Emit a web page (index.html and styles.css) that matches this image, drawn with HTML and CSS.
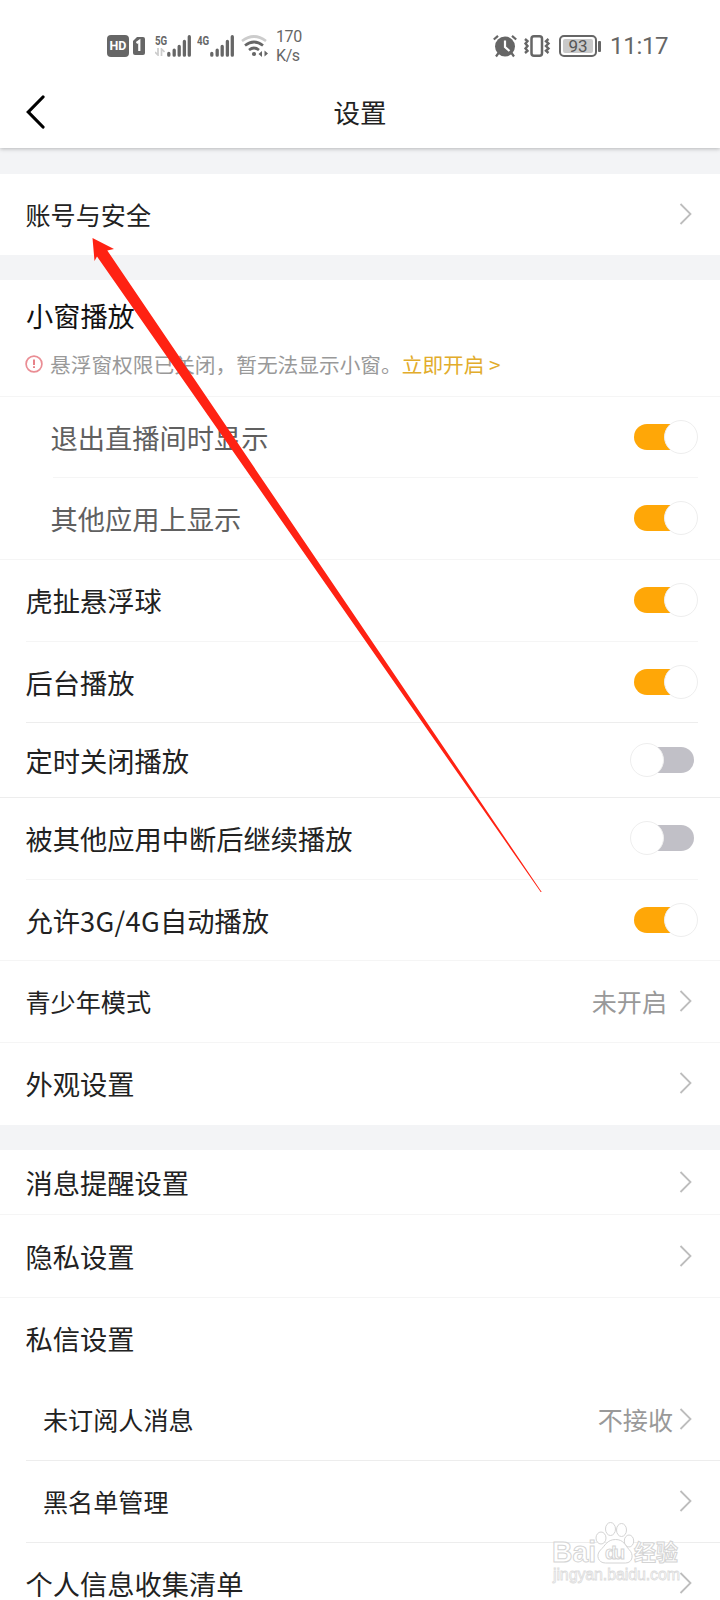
FILE: index.html
```html
<!DOCTYPE html>
<html lang="zh-CN">
<head>
<meta charset="utf-8">
<title>设置</title>
<link rel="stylesheet" href="styles.css">
</head>
<body>
<svg class="defs" width="0" height="0">
  <symbol id="chev" viewBox="0 0 14 24"><path d="M1.5 2 11.500 12 1.500 22" fill="none" stroke="#bdbdbd" stroke-width="1.800"/></symbol>
  <symbol id="bars" viewBox="0 0 24 24"><path d="M1.800 19.500V21.200M7.200 16.200V21.200M12.200 12.500V21.200M17.400 7.500V21.200M22.300 2.700V21.200" fill="none" stroke="#666" stroke-width="3.300" stroke-linecap="round"/></symbol>
</svg>
<div class="screen">
  <div class="status">
    <span class="hd">HD</span>
    <svg class="sim" width="12" height="18" viewBox="0 0 12 18"><path d="M4 0H10Q12 0 12 2V16Q12 18 10 18H2Q0 18 0 16V4Z" fill="#666"/><path d="M3.500 6 6.300 4V14" fill="none" stroke="#fff" stroke-width="2.200"/></svg>
    <span class="net net5"><b>5G</b><svg width="10" height="8" viewBox="0 0 10 8"><path d="M3 0V7L0 4M6.500 8V1L9.500 4" fill="none" stroke="#ccc" stroke-width="1.700"/></svg></span>
    <svg class="bars" width="24" height="24"><use href="#bars"/></svg>
    <span class="net net4"><b>4G</b></span>
    <svg class="bars" width="24" height="24"><use href="#bars"/></svg>
    <svg class="wifi" width="28" height="24" viewBox="0 0 28 24"><g fill="none" stroke-width="2.700"><path d="M1 7Q13 -2 25 7" stroke="#ccc"/><path d="M4 11.500Q13 4.500 22 11.500" stroke="#666"/><path d="M8 16Q13 12 18 16" stroke="#666"/></g><circle cx="13" cy="20" r="2.100" fill="#666"/><path d="M21 17V23L17.500 20ZM23.500 16.500V22.500L27 19.500Z" fill="#666"/></svg>
    <span class="speed">170<br>K/s</span>
    <svg class="alarm" width="24" height="24" viewBox="0 0 24 24"><circle cx="12" cy="12.500" r="10" fill="#666"/><path d="M12 6.500V13L16.500 17" fill="none" stroke="#fff" stroke-width="2.200"/><path d="M.8 5.500 5 1.800M23.200 5.500 19 1.800M5.500 19 3 22.500M18.500 19 21 22.500" stroke="#666" stroke-width="2.200"/></svg>
    <svg class="vib" width="28" height="24" viewBox="0 0 28 24"><rect x="8.500" y="2.300" width="10.500" height="19.400" rx="2.500" fill="none" stroke="#666" stroke-width="2.500"/><path d="M2 5 4.500 7.200 2.500 9.600 4.500 12 2.500 14.400 4.500 16.800 2 19M25.500 5 23 7.200 25.500 9.600 23 12 25.500 14.400 23 16.800 25.500 19" fill="none" stroke="#666" stroke-width="2.400"/></svg>
    <span class="battery"><b>93</b></span><i class="tip"></i>
    <span class="clock">11:17</span>
  </div>
  <header class="header">
    <svg width="20" height="34" viewBox="0 0 20 34"><path d="M17 2 2.300 17 17 32" fill="none" stroke="#000" stroke-width="3.200" stroke-linecap="round"/></svg>
    <h1>设置</h1>
  </header>
  <section class="card account">
    <div class="row small"><span>账号与安全</span><svg class="chev"><use href="#chev"/></svg></div>
  </section>
  <section class="card">
    <div class="mini">
      <div class="mini-title">小窗播放</div>
      <div class="hint"><svg width="18" height="18" viewBox="0 0 18 18"><circle cx="9" cy="9" r="7.900" fill="none" stroke="#ea8d94" stroke-width="1.700"/><path d="M9 4.500V10M9 11.300V13" stroke="#e5757d" stroke-width="1.800"/></svg><span>悬浮窗权限已关闭，暂无法显示小窗。</span><b>立即开启 &gt;</b></div>
    </div>
    <div class="row sub inset h81"><span>退出直播间时显示</span><i class="toggle on"></i></div>
    <div class="row sub h82"><span>其他应用上显示</span><i class="toggle on"></i></div>
    <div class="row inset h82"><span>虎扯悬浮球</span><i class="toggle on"></i></div>
    <div class="row inset strong h81"><span>后台播放</span><i class="toggle on"></i></div>
    <div class="row strong h75"><span>定时关闭播放</span><i class="toggle"></i></div>
    <div class="row inset h82"><span>被其他应用中断后继续播放</span><i class="toggle"></i></div>
    <div class="row h81"><span>允许<em>3G/4G</em>自动播放</span><i class="toggle on"></i></div>
    <div class="row small h82"><span>青少年模式</span><small>未开启</small><svg class="chev"><use href="#chev"/></svg></div>
    <div class="row last h82"><span>外观设置</span><svg class="chev"><use href="#chev"/></svg></div>
  </section>
  <section class="card">
    <div class="row h65"><span>消息提醒设置</span><svg class="chev"><use href="#chev"/></svg></div>
    <div class="row h83"><span>隐私设置</span><svg class="chev"><use href="#chev"/></svg></div>
    <div class="row last h81"><span>私信设置</span></div>
    <div class="row small deep strong h82"><span>未订阅人消息</span><small class="tight">不接收</small><svg class="chev"><use href="#chev"/></svg></div>
    <div class="row small deep strong h82"><span>黑名单管理</span><svg class="chev"><use href="#chev"/></svg></div>
    <div class="row last h81"><span>个人信息收集清单</span><svg class="chev"><use href="#chev"/></svg></div>
  </section>
  <svg class="overlay" width="720" height="1600" viewBox="0 0 720 1600">
    <g class="mark">
      <text x="552" y="1562" font-size="29" textLength="44" lengthAdjust="spacingAndGlyphs">Bai</text>
      <g><ellipse cx="601" cy="1538" rx="5" ry="6"/><ellipse cx="610.500" cy="1529" rx="5" ry="6.500"/><ellipse cx="621.500" cy="1530" rx="5" ry="6.500"/><ellipse cx="629" cy="1541" rx="4.700" ry="6"/><path d="M615.500 1539.500C607 1539.500 605 1546 600.500 1550C595.500 1555 598 1563 605.500 1563H625.500C633 1563 634 1554 629 1549.500C625 1545 623.500 1539.500 615.500 1539.500Z"/></g>
      <text x="605" y="1559" font-size="19" textLength="20">du</text>
      <text class="cn" x="634" y="1560" font-size="22">经验</text>
      <text class="url" x="553" y="1580" font-size="16" textLength="127">jingyan.baidu.com</text>
    </g>
    <path d="M92.500 238 114 249 107.300 250.500 541.700 892 540.700 892 97 256.500 94.500 261Z" fill="#ff2213"/>
  </svg>
</div>
</body>
</html>
```
FILE: styles.css
```css
*, ::before, ::after { box-sizing: border-box; }
body { margin: 0; background: #f3f4f6; }
.defs { position: absolute; }
.screen {
  position: relative;
  width: 720px;
  height: 1600px;
  overflow: hidden;
  font-family: "Noto Sans CJK SC", sans-serif;
  color: #222;
}
.status {
  display: flex;
  align-items: center;
  position: relative;
  z-index: 1;
  height: 75px;
  padding: 17px 0 0 107px;
  background: #fff;
  color: #666;
  font-family: Roboto, sans-serif;
}
.status > * { flex: none; }
.hd {
  width: 22px; height: 22px;
  border-radius: 4px;
  background: #666; color: #fff;
  font: bold 12.500px/22px Roboto, sans-serif;
  text-align: center;
}
.sim { margin-left: 4px; }
.net { height: 24px; width: 13px; }
.net b { display: block; font: bold 13.500px/12px Roboto, sans-serif; transform: scaleX(.72); transform-origin: 0 0; }
.net svg { display: block; margin-top: 2px; }
.net5 { margin-left: 10px; width: 12px; }
.net4 { margin-left: 6px; }
.wifi { margin-left: 7px; }
.speed { width: 30px; margin-left: 7px; font-size: 16px; line-height: 19px; letter-spacing: -.4px; }
.alarm { margin-left: 187px; }
.vib { margin-left: 6px; }
.battery {
  display: flex;
  width: 38px; height: 22px;
  margin-left: 8px;
  padding: 2px;
  border: 2px solid #666;
  border-radius: 5px;
}
.battery b { flex: 1; background: #c9c9c9; font: 400 17px/14px Roboto, sans-serif; text-align: center; border-radius: 2px; color: #555; }
.tip { width: 3px; height: 11px; margin-left: 1px; border-radius: 1px; background: #666; }
.clock { margin-left: 9px; font: 400 24px/28px Roboto, sans-serif; letter-spacing: -.3px; }
.header {
  display: grid;
  grid-template-columns: 60px 1fr 60px;
  align-items: center;
  height: 73px;
  position: relative;
  background: #fff;
  box-shadow: 0 1px 4px rgba(0, 0, 0, .25);
}
.header svg { margin-left: 26px; }
.header h1 { margin: 1px 0 0; font-size: 26.500px; line-height: 40px; font-weight: 400; text-align: center; }
.card { margin-bottom: 25px; background: #fff; }
.account { margin-top: 26px; }
.row {
  display: flex;
  align-items: center;
  height: 81px;
  padding: 0 27px 2px 26px;
  background: linear-gradient(#f5f5f5, #f5f5f5) 0 100% / 100% 1px no-repeat;
}
.row span { flex: 1; margin-left: -.5px; font-size: 27.250px; line-height: 28px; }
.row em { font-style: normal; letter-spacing: .3px; }
.inset { background-position: 26px 100%; background-size: 672px 1px; }
.strong { background-image: linear-gradient(#ededed, #ededed); }
.deep { background-position: 26px 100%; }
.last { background: none; }
.account .row { background: none; }
.row.small span { font-size: 25.100px; }
.sub { padding-left: 51px; color: #606060; }
.sub.inset { background-position: 53px 100%; background-size: 645px 1px; }
.deep { padding-left: 43.500px; }
.row small { margin-right: 12px; font-size: 25.100px; line-height: 28px; color: #999; }
.row small.tight { margin-right: 6px; }
.h65 { height: 65px; }
.h75 { height: 75px; }
.h81 { height: 81px; }
.h82 { height: 82px; }
.h83 { height: 83px; }
.chev { width: 14px; height: 24px; }
.mini { height: 117px; padding: 15px 26px 0 26px; background: linear-gradient(#f5f5f5, #f5f5f5) 0 100% / 100% 1px no-repeat; }
.mini-title { font-size: 27.200px; line-height: 40px; color: #111; }
.hint { display: flex; align-items: center; height: 30px; margin-top: 14px; font-size: 20.700px; line-height: 30px; color: #999; }
.hint svg { margin: 0 7px 0 -1px; }
.hint b { font-weight: 400; color: #e2ac2b; }
.toggle {
  position: relative;
  width: 64px;
  height: 34px;
  margin-right: -1px;
}
.toggle::before { content: ""; position: absolute; left: 8px; right: 0; top: 4px; height: 26px; border-radius: 13px; background: #c1c0c7; }
.toggle::after { content: ""; position: absolute; left: 0; top: 0; width: 34px; height: 34px; border: 1.500px solid #eee; border-radius: 50%; background: #fff; }
.toggle.on { margin-right: -5px; }
.toggle.on::before { left: 0; right: 8px; background: #ffa707; }
.toggle.on::after { left: 30px; }
.overlay { position: absolute; left: 0; top: 0; }
.mark { fill: #fff; stroke: #d4d4d4; stroke-width: 1; font-family: "Liberation Sans", sans-serif; font-weight: bold; }
.mark .cn { font-family: "Noto Sans CJK SC", sans-serif; }
.mark .url { stroke-width: .8; font-weight: 400; stroke: #dcdcdc; }
```
